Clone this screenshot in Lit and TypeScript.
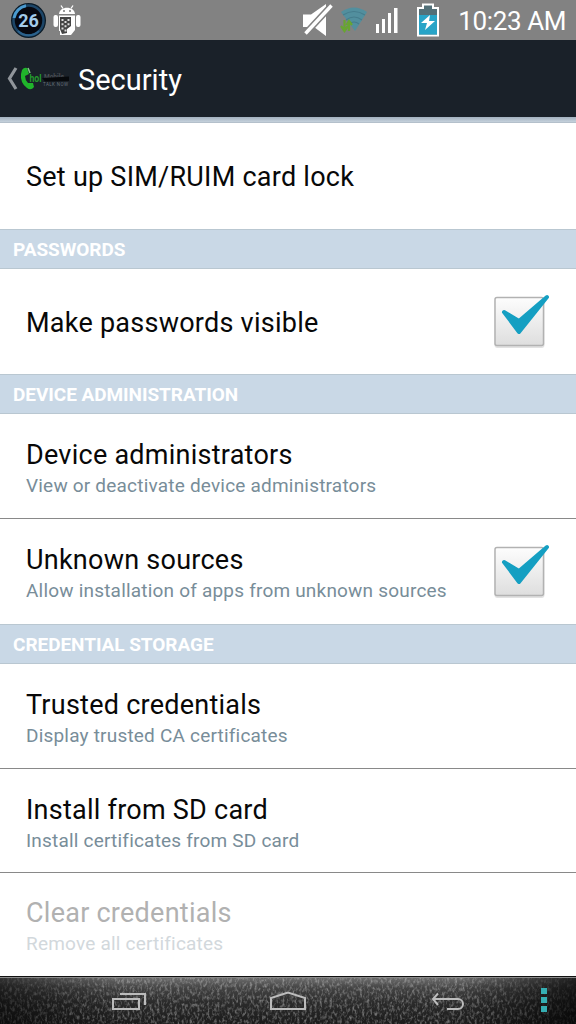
import { LitElement, html, css, nothing } from "lit";
import { customElement, property } from "lit/decorators.js";

@customElement("status-bar")
class StatusBar extends LitElement {
  static styles = css`
    :host { display: flex; flex: none; align-items: center; height: 40px; background: #828282; color: #fff; box-sizing: border-box; padding: 0 10px; }
    svg { display: block; flex: none; }
    .level { margin-right: 6px; }
    .spacer { flex: 1; }
    .wifi { margin-left: 6px; }
    .signal { margin-left: 7px; }
    .battery { margin-left: 17px; }
    .time { margin-left: 18px; padding-top: 1px; font-size: 26px; line-height: 40px; letter-spacing: -0.4px; white-space: nowrap; }
  `;
  render() {
    return html`
      <svg class="level" width="37" height="38" viewBox="0 0 37 38">
        <circle cx="18.5" cy="19.5" r="17.500" fill="#0a1a27"/>
        <circle cx="18.5" cy="19.5" r="15" fill="#060810" stroke="#1d4668" stroke-width="2.500"/>
        <path d="M4 17A15 15 0 0 1 16 4.700" fill="none" stroke="#4a9ad0" stroke-width="3"/>
        <path d="M8 30A15 15 0 0 0 29 30" fill="none" stroke="#2c628c" stroke-width="2"/>
        <text x="18.500" y="26" text-anchor="middle" font-size="18" font-weight="700" fill="#a3cbea">26</text>
      </svg>
      <svg width="28" height="32" viewBox="0 0 28 32">
        <path d="M8 1.500L10 4.500M20 1.500L18 4.500" stroke="#fff" stroke-width="1.300"/>
        <path d="M6 10C6.500 1.500 21.500 1.500 22 10Z" fill="#fff"/>
        <circle cx="11" cy="7" r="1" fill="#777"/><circle cx="17" cy="7" r="1" fill="#777"/>
        <rect x=".5" y="11" width="4.500" height="12" rx="2" fill="#fff"/><rect x="23" y="11" width="4.500" height="12" rx="2" fill="#fff"/>
        <path d="M6 11.500H22V26L18 31H7V27H6Z" fill="#fff"/>
        <path d="M7 13H18V22L14 25V29L9 30L7 25Z" fill="#444"/>
        <path d="M9.500 15v13M15.500 15v8" stroke="#ddd" stroke-width="2" stroke-dasharray="2 2.300"/>
        <path d="M12.500 17v11" stroke="#ddd" stroke-width="2" stroke-dasharray="2 2.300"/>
      </svg>
      <div class="spacer"></div>
      <svg width="32" height="34" viewBox="0 0 32 34">
        <path d="M1 11.500H9L24 1V33L12 24H1Z" fill="#fff"/>
        <path d="M29.500 2.500L3.500 30.500" stroke="#828282" stroke-width="6.500"/>
        <path d="M29.500 2.500L3.500 30.500" stroke="#fff" stroke-width="3.400"/>
      </svg>
      <svg class="wifi" width="28" height="28" viewBox="0 0 28 28">
        <path d="M1 6Q14-3 27 6L15 25Z" fill="#528f9e"/>
        <path d="M3 9Q14 2 25 9M6 14Q14 8 22 14M9 18Q14 14 19 18" fill="none" stroke="#457c8c" stroke-width="1.100"/>
        <path d="M4.500 14V24M1 20L4.500 25L8 20M9 25V15M6.500 19L9 15L12 19" fill="none" stroke="#68a531" stroke-width="2.200"/>
      </svg>
      <svg class="signal" width="24" height="28" viewBox="0 0 24 28">
        <path d="M1 18h3v9H1zM7 13h3v14H7zM13 7h3v20h-3zM19 2h3.500v25H19z" fill="#fff"/>
      </svg>
      <svg class="battery" width="24" height="34" viewBox="0 0 24 34">
        <path d="M2 5H7V1.500H17V5H22V32.500H2Z" fill="#537078" stroke="#fff" stroke-width="2"/>
        <path d="M3 12H21V31.500H3Z" fill="#28a4c7"/>
        <path d="M14 12L5 20H11L9 27L19 18H13Z" fill="#fff"/>
      </svg>
      <span class="time">10:23 AM</span>`;
  }
}

@customElement("title-bar")
class TitleBar extends LitElement {
  static styles = css`
    :host { display: flex; flex: none; align-items: center; height: 77px; background: #1a2129; color: #fff; padding-left: 6px; }
    svg { display: block; flex: none; }
    h1 { margin: 3px 0 0 7px; font-size: 29px; font-weight: 400; line-height: 36px; white-space: nowrap; }
  `;
  render() {
    return html`
      <svg width="65" height="32" viewBox="0 0 65 32">
        <path d="M10 5L3.500 15.500L10 26" fill="none" stroke="#90959a" stroke-width="3.200"/>
        <path d="M16 7Q18 4 21 5L23 11L19 13Q19 17 22 20L27 20L28 24Q25 28 21 25Q14 20 15 11Z" fill="#20b52b"/>
        <path d="M22 5L24 10" stroke="#84c78b" stroke-width="1.500"/>
        <text x="23.500" y="18.500" font-size="11" font-weight="700" fill="#239a2c" textLength="12" lengthAdjust="spacingAndGlyphs">hol</text>
        <text x="38" y="15.500" font-size="6.500" font-weight="700" fill="#4a4f54" textLength="20">Mobile</text>
        <path d="M36 15L63 13.500V18L39 18.500Z" fill="#07090c"/>
        <text x="37" y="22.500" font-size="4.500" fill="#66707a" textLength="25">TALK NOW</text>
      </svg>
      <h1>Security</h1>`;
  }
}

@customElement("pref-row")
class PrefRow extends LitElement {
  @property() label = "";
  @property() summary = "";
  @property({ type: Boolean }) checked = false;
  @property({ type: Boolean, reflect: true }) disabled = false;
  static styles = css`
    :host { display: flex; align-items: center; box-sizing: border-box; height: 105px; padding: 0 24px 0 26px; color: #080808; }
    .text { flex: 1; padding-top: 2px; }
    .label { font-size: 27px; line-height: 34px; letter-spacing: 0.25px; white-space: nowrap; }
    .summary { font-size: 19px; line-height: 24px; margin-top: 2px; letter-spacing: 0.2px; color: #788d99; white-space: nowrap; }
    svg { display: block; flex: none; }
    :host([disabled]) .label { color: #b1b1b1; }
    :host([disabled]) .summary { color: #d2d8dc; }
  `;
  render() {
    return html`
      <div class="text">
        <div class="label">${this.label}</div>
        ${this.summary ? html`<div class="summary">${this.summary}</div>` : nothing}
      </div>
      ${this.checked ? html`
        <svg width="60" height="60" viewBox="0 0 60 60">
          <defs><linearGradient id="g" x2="0" y2="1"><stop stop-color="#fdfdfd"/><stop offset="1" stop-color="#dedede"/></linearGradient></defs>
          <rect x="2.500" y="7" width="50" height="49" rx="3" fill="#e2e2e2"/>
          <rect x="3" y="5.500" width="48.500" height="48" rx="2" fill="url(#g)" stroke="#b2b2b2" stroke-width="1.500"/>
          <path d="M12 20L27 29L55 5L27 40Z" fill="#159fc2" stroke="#159fc2" stroke-width="4" stroke-linejoin="round"/>
        </svg>` : nothing}`;
  }
}

@customElement("nav-bar")
class NavBar extends LitElement {
  static styles = css`
    :host { display: block; flex: none; height: 48px; background: #202020; }
    svg { display: block; }
  `;
  render() {
    return html`
      <svg width="576" height="48" viewBox="0 0 576 48">
        <defs>
          <linearGradient id="v" x2="0" y2="1"><stop stop-color="#747474"/><stop offset=".25" stop-color="#434343"/><stop offset=".55" stop-color="#2b2b2b"/><stop offset="1" stop-color="#1b1b1b"/></linearGradient>
          <linearGradient id="h"><stop stop-opacity=".55"/><stop offset=".22" stop-opacity="0"/><stop offset=".8" stop-opacity="0"/><stop offset="1" stop-opacity=".7"/></linearGradient>
          <filter id="grain" x="0" y="0" width="1" height="1">
            <feTurbulence type="fractalNoise" baseFrequency=".4 .25" numOctaves="3" seed="4"/>
            <feColorMatrix values="0 0 0 0 .65  0 0 0 0 .65  0 0 0 0 .65  2.500 0 0 0 -1.100"/>
          </filter>
        </defs>
        <rect width="576" height="48" fill="url(#v)"/>
        <rect width="576" height="48" filter="url(#grain)" opacity=".45"/>
        <rect width="576" height="48" fill="url(#h)"/>
        <path d="M0 .5H576" stroke="#111"/><path d="M0 1.500H576" stroke="#8a8a8a"/>
        <g fill="none" stroke="#bcbcbc" stroke-width="2">
          <path d="M113 23H139V33H113ZM120 18H145V29"/>
          <path d="M271 33V22L288 16.500L305 22V33Z"/>
          <path d="M438 17.500L433 23L438 29M433 23H458A5 5 0 0 1 458 33H447"/>
        </g>
        <path d="M541 12h6v6h-6zM541 21h6v6h-6zM541 30h6v6h-6z" fill="#35aeb2"/>
      </svg>`;
  }
}

@customElement("app-root")
class AppRoot extends LitElement {
  static styles = css`
    :host { display: flex; flex-direction: column; width: 576px; height: 1024px; overflow: hidden; background: #fff; font-family: Roboto, "Liberation Sans", sans-serif; }
    main { flex: 1; min-height: 0; }
    .edge { flex: none; height: 6px; box-sizing: border-box; background: linear-gradient(#a3b1bf, #c5d1dc); border-bottom: 1px solid #b4c0cb; }
    .single { height: 106px; }
    .section { box-sizing: border-box; height: 40px; margin: 0; padding-left: 13px; background: #c9d8e6; border-top: 1px solid #b9c7d1; border-bottom: 1px solid #b9c7d1; color: #fff; font-size: 19px; line-height: 39px; font-weight: 700; letter-spacing: -0.05px; white-space: nowrap; }
    .line { border-bottom: 1px solid #898989; padding-top: 2px; }
    .short { height: 104px; }
  `;
  render() {
    return html`
      <status-bar></status-bar>
      <title-bar></title-bar>
      <div class="edge"></div>
      <main>
        <pref-row class="single" label="Set up SIM/RUIM card lock"></pref-row>
        <h2 class="section">PASSWORDS</h2>
        <pref-row label="Make passwords visible" checked></pref-row>
        <h2 class="section">DEVICE ADMINISTRATION</h2>
        <pref-row class="line" label="Device administrators" summary="View or deactivate device administrators"></pref-row>
        <pref-row label="Unknown sources" summary="Allow installation of apps from unknown sources" checked></pref-row>
        <h2 class="section">CREDENTIAL STORAGE</h2>
        <pref-row class="line" label="Trusted credentials" summary="Display trusted CA certificates"></pref-row>
        <pref-row class="line short" label="Install from SD card" summary="Install certificates from SD card"></pref-row>
        <pref-row class="short" label="Clear credentials" summary="Remove all certificates" disabled></pref-row>
      </main>
      <nav-bar></nav-bar>`;
  }
}
